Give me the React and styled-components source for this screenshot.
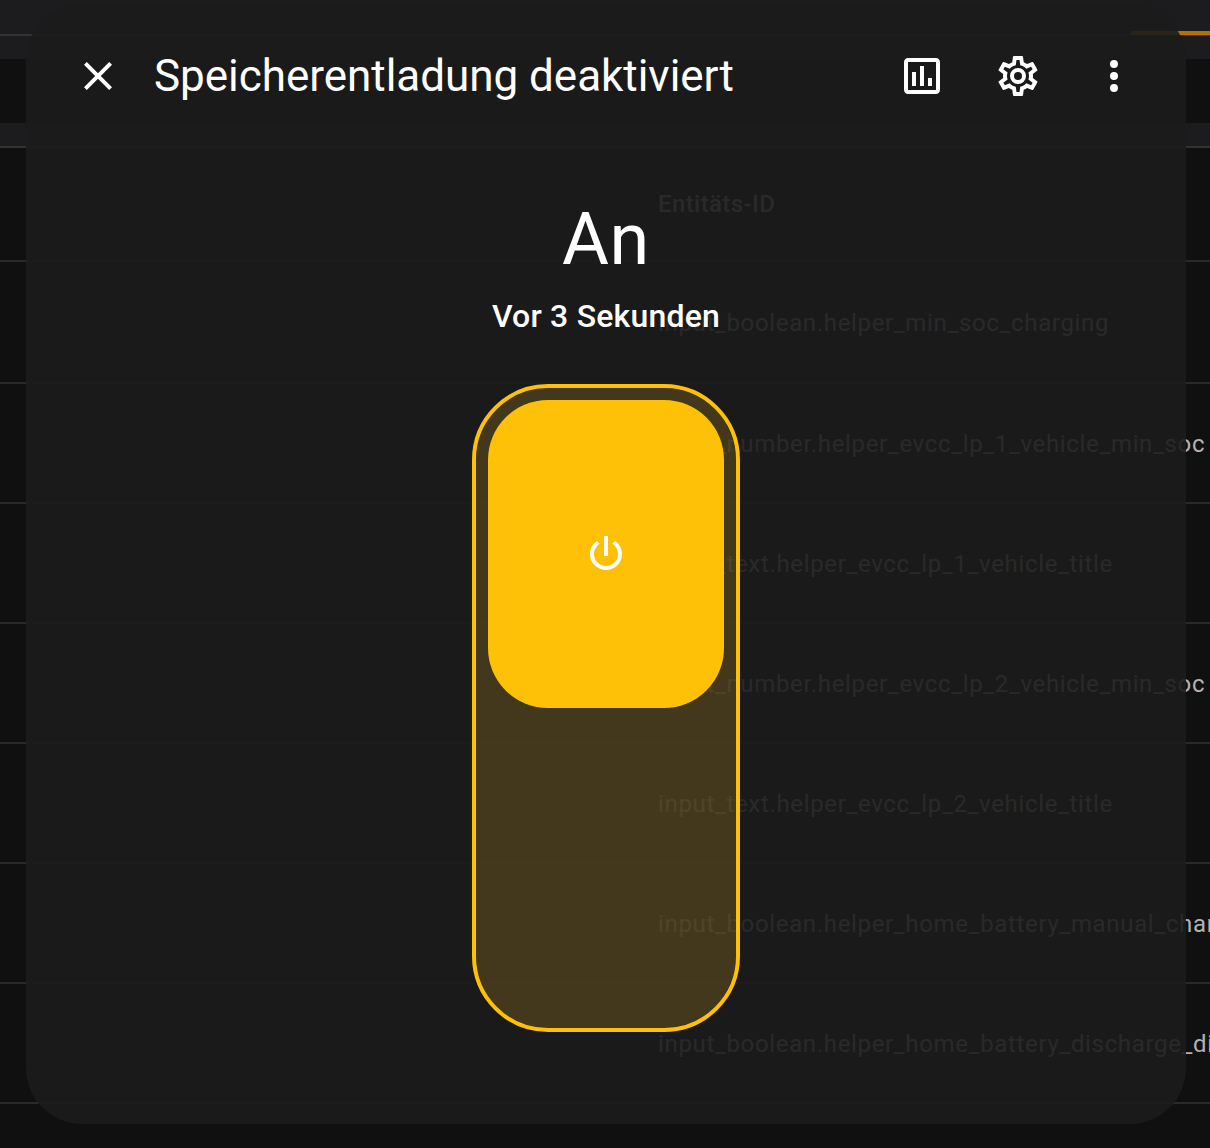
import React from "react";
import styled, { createGlobalStyle } from "styled-components";

const GlobalStyle = createGlobalStyle`
  *, *::before, *::after { box-sizing: border-box; }
  body {
    margin: 0;
    background: #101010;
    font-family: Roboto, "Liberation Sans", sans-serif;
    overflow: hidden;
  }
`;

const Screen = styled.div`
  position: relative;
  width: 1210px;
  height: 1148px;
  overflow: hidden;
  background: #101010;
`;

const Page = styled.div`
  display: flex;
  flex-direction: column;
`;

const TabBar = styled.div`
  position: relative;
  height: 36px;
  background: #1c1c1e;
  border-bottom: 2px solid #333335;
`;

const TabIndicator = styled.div`
  position: absolute;
  right: 0;
  top: 31px;
  width: 79px;
  height: 4px;
  background: #b77300;
`;

const Toolbar = styled.div`
  height: 112px;
  padding: 23px 0;
  background: #1c1c1e;
  border-bottom: 2px solid #333335;
`;

const SearchField = styled.div`
  height: 64px;
  background: #101010;
`;

const Row = styled.div`
  display: flex;
  align-items: center;
  height: ${(p) => p.$height || 120}px;
  padding: ${(p) => (p.$head ? "0 0 1px 658px" : "1px 0 0 658px")};
  border-bottom: 2px solid #2a2a2a;
  color: #b2b2b2;
  font-size: 24px;
  font-weight: ${(p) => (p.$head ? 500 : 400)};
  letter-spacing: ${(p) => (p.$head ? "0.4px" : "0.66px")};
  white-space: nowrap;
`;

const Dialog = styled.section`
  position: absolute;
  left: 26px;
  top: 4px;
  width: 1160px;
  height: 1120px;
  border-radius: 56px;
  background: rgba(27, 27, 27, 0.91);
  color: #fff;
  display: flex;
  flex-direction: column;
`;

const DialogHeader = styled.header`
  display: flex;
  align-items: center;
  height: 144px;
  padding: 0 24px;
`;

const Title = styled.h1`
  flex: 1;
  margin: 0;
  padding-left: 8px;
  font-size: 44px;
  font-weight: 400;
  line-height: 56px;
  letter-spacing: -0.03px;
  white-space: nowrap;
`;

const IconButton = styled.button`
  display: flex;
  align-items: center;
  justify-content: center;
  width: 96px;
  height: 96px;
  padding: 0;
  border: 0;
  background: none;
  color: inherit;
`;

const Glyph = styled.svg`
  display: block;
  width: 48px;
  height: 48px;
  fill: #fff;
`;

const Content = styled.div`
  display: flex;
  flex-direction: column;
  align-items: center;
  padding-top: 48px;
`;

const State = styled.p`
  margin: 0;
  font-size: 72px;
  line-height: 88px;
  font-weight: 400;
  letter-spacing: 0.6px;
`;

const Changed = styled.p`
  margin: 8px 0 0;
  font-size: 32px;
  line-height: 48px;
  font-weight: 500;
  letter-spacing: 0.2px;
`;

const Switch = styled.div`
  width: 268px;
  height: 648px;
  margin-top: 44px;
  padding: 12px;
  border: 4px solid #ffc107;
  border-radius: 76px;
  background: rgba(250, 190, 40, 0.185);
  background-clip: padding-box;
`;

const Thumb = styled.div`
  display: flex;
  align-items: center;
  justify-content: center;
  height: 308px;
  border-radius: 60px;
  background: #ffc107;
`;

const ICONS = {
  close:
    "M19,6.41L17.59,5L12,10.59L6.41,5L5,6.41L10.59,12L5,17.59L6.41,19L12,13.41L17.59,19L19,17.59L13.41,12L19,6.41Z",
  chart:
    "M9 17H7V10H9V17M13 17H11V7H13V17M17 17H15V13H17V17M19 19H5V5H19V19.1M19 3H5C3.9 3 3 3.9 3 5V19C3 20.1 3.9 21 5 21H19C20.1 21 21 20.1 21 19V5C21 3.9 20.1 3 19 3Z",
  cog: "M12,8A4,4 0 0,1 16,12A4,4 0 0,1 12,16A4,4 0 0,1 8,12A4,4 0 0,1 12,8M12,10A2,2 0 0,0 10,12A2,2 0 0,0 12,14A2,2 0 0,0 14,12A2,2 0 0,0 12,10M10,22C9.75,22 9.54,21.82 9.5,21.58L9.13,18.93C8.5,18.68 7.96,18.34 7.44,17.94L4.95,18.95C4.73,19.03 4.46,18.95 4.34,18.73L2.34,15.27C2.21,15.05 2.27,14.78 2.46,14.63L4.57,12.97L4.5,12L4.57,11L2.46,9.37C2.27,9.22 2.21,8.95 2.34,8.73L4.34,5.27C4.46,5.05 4.73,4.96 4.95,5.05L7.44,6.05C7.96,5.66 8.5,5.32 9.13,5.07L9.5,2.42C9.54,2.18 9.75,2 10,2H14C14.25,2 14.46,2.18 14.5,2.42L14.87,5.07C15.5,5.32 16.04,5.66 16.56,6.05L19.05,5.05C19.27,4.96 19.54,5.05 19.66,5.27L21.66,8.73C21.79,8.95 21.73,9.22 21.54,9.37L19.43,11L19.5,12L19.43,13L21.54,14.63C21.73,14.78 21.79,15.05 21.66,15.27L19.66,18.73C19.54,18.95 19.27,19.04 19.05,18.95L16.56,17.95C16.04,18.34 15.5,18.68 14.87,18.93L14.5,21.58C14.46,21.82 14.25,22 14,22H10M11.25,4L10.88,6.61C9.68,6.86 8.62,7.5 7.85,8.39L5.44,7.35L4.69,8.65L6.8,10.2C6.4,11.37 6.4,12.64 6.8,13.8L4.68,15.36L5.43,16.66L7.86,15.62C8.63,16.5 9.68,17.14 10.87,17.38L11.24,20H12.76L13.13,17.39C14.32,17.14 15.37,16.5 16.14,15.62L18.57,16.66L19.32,15.36L17.2,13.81C17.6,12.64 17.6,11.37 17.2,10.2L19.31,8.65L18.56,7.35L16.15,8.39C15.38,7.5 14.32,6.86 13.12,6.62L12.75,4H11.25Z",
  dots: "M12,16A2,2 0 0,1 14,18A2,2 0 0,1 12,20A2,2 0 0,1 10,18A2,2 0 0,1 12,16M12,10A2,2 0 0,1 14,12A2,2 0 0,1 12,14A2,2 0 0,1 10,12A2,2 0 0,1 12,10M12,4A2,2 0 0,1 14,6A2,2 0 0,1 12,8A2,2 0 0,1 10,6A2,2 0 0,1 12,4Z",
  power:
    "M16.56,5.44L15.11,6.89C16.84,7.94 18,9.83 18,12A6,6 0 0,1 12,18A6,6 0 0,1 6,12C6,9.83 7.16,7.94 8.88,6.88L7.44,5.44C5.36,6.88 4,9.28 4,12A8,8 0 0,0 12,20A8,8 0 0,0 20,12C20,9.28 18.64,6.88 16.56,5.44M13,3H11V13H13",
};

const Icon = ({ name }) => (
  <Glyph viewBox="0 0 24 24" aria-hidden="true">
    <path d={ICONS[name]} />
  </Glyph>
);

const ENTITIES = [
  "input_boolean.helper_min_soc_charging",
  "input_number.helper_evcc_lp_1_vehicle_min_soc",
  "input_text.helper_evcc_lp_1_vehicle_title",
  "input_number.helper_evcc_lp_2_vehicle_min_soc",
  "input_text.helper_evcc_lp_2_vehicle_title",
  "input_boolean.helper_home_battery_manual_char",
  "input_boolean.helper_home_battery_discharge_di",
];

export default function App() {
  return (
    <Screen>
      <GlobalStyle />
      <Page>
        <TabBar>
          <TabIndicator />
        </TabBar>
        <Toolbar>
          <SearchField />
        </Toolbar>
        <Row $head $height={114}>
          Entitäts-ID
        </Row>
        {ENTITIES.map((id, i) => (
          <Row key={id} $height={i === 0 ? 122 : 120}>
            {id}
          </Row>
        ))}
      </Page>
      <Dialog role="dialog">
        <DialogHeader>
          <IconButton aria-label="Schließen">
            <Icon name="close" />
          </IconButton>
          <Title>Speicherentladung deaktiviert</Title>
          <IconButton>
            <Icon name="chart" />
          </IconButton>
          <IconButton>
            <Icon name="cog" />
          </IconButton>
          <IconButton>
            <Icon name="dots" />
          </IconButton>
        </DialogHeader>
        <Content>
          <State>An</State>
          <Changed>Vor 3 Sekunden</Changed>
          <Switch>
            <Thumb>
              <Icon name="power" />
            </Thumb>
          </Switch>
        </Content>
      </Dialog>
    </Screen>
  );
}
